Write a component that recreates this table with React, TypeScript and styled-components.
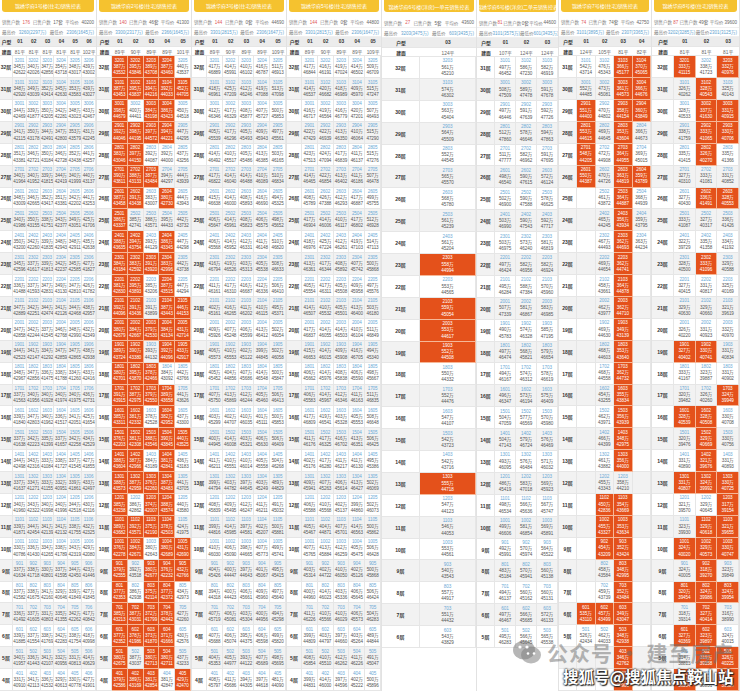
import styled, { createGlobalStyle } from 'styled-components'

const GlobalStyle = createGlobalStyle`
  html, body {
    margin: 0;
    padding: 0;
    background: #fff;
  }
  body {
    font-family: "Liberation Sans", "Noto Sans CJK SC", sans-serif;
  }
`

const Page = styled.div`
  position: relative;
  width: 740px;
  height: 691px;
  overflow: hidden;
  display: flex;
  background: #fff;
`

const Panel = styled.div<{ $w: number }>`
  width: ${(p) => p.$w}px;
  flex: none;
  display: flex;
  flex-direction: column;
  border-right: 1px solid #e2e2e2;
  box-sizing: border-box;
  &:last-child {
    border-right: none;
  }
`

const Title = styled.div`
  height: 12px;
  margin: 0 2px 6px;
  background: #f5c22f;
  border-radius: 0 0 3px 3px;
  color: #fff;
  font-size: 5px;
  display: flex;
  align-items: center;
  justify-content: center;
  white-space: nowrap;
  overflow: hidden;
`

const InfoRow = styled.div`
  height: 10px;
  padding: 0 2px;
  display: flex;
  align-items: center;
  justify-content: space-between;
  font-size: 4.5px;
  color: #888;
  white-space: nowrap;
  overflow: hidden;
  border-bottom: 1px solid #f0f0f0;
  box-sizing: border-box;
`

const Num = styled.span<{ $tone?: 'red' | 'blue' | 'gray' }>`
  color: ${(p) => (p.$tone === 'red' ? '#e0585a' : p.$tone === 'blue' ? '#5e9fd0' : '#666')};
`

const HeadRow = styled.div<{ $cols: string; $shade?: boolean; $h: number }>`
  display: grid;
  grid-template-columns: ${(p) => p.$cols};
  height: ${(p) => p.$h}px;
  background: ${(p) => (p.$shade ? '#ececec' : '#fff')};
  font-size: 4.8px;
  color: #555;
  border-bottom: 1px solid #e6e6e6;
  box-sizing: border-box;
`

const HeadCell = styled.div<{ $bold?: boolean }>`
  display: flex;
  align-items: center;
  justify-content: center;
  font-weight: ${(p) => (p.$bold ? 700 : 400)};
  color: ${(p) => (p.$bold ? '#333' : '#666')};
  white-space: nowrap;
  overflow: hidden;
`

const FloorRow = styled.div<{ $cols: string; $alt: boolean }>`
  display: grid;
  grid-template-columns: ${(p) => p.$cols};
  height: 21.9px;
  background: ${(p) => (p.$alt ? '#f2f2f2' : '#fff')};
  flex: none;
`

const FloorLabel = styled.div`
  display: flex;
  align-items: center;
  justify-content: center;
  font-size: 5px;
  font-weight: 700;
  color: #333;
  border-right: 1px solid #e6e6e6;
  border-bottom: 1px solid #e6e6e6;
`

const Cell = styled.div<{ $mark: string }>`
  display: flex;
  flex-direction: column;
  align-items: center;
  justify-content: center;
  gap: 0.6px;
  font-size: 4.6px;
  line-height: 5.6px;
  letter-spacing: -0.1px;
  white-space: nowrap;
  overflow: hidden;
  color: ${(p) => (p.$mark === 'o' ? '#fff' : '#555')};
  background: ${(p) => (p.$mark === 'o' ? '#e4511b' : 'transparent')};
  border-right: 1px solid ${(p) => (p.$mark === 'o' ? '#f6b797' : '#e6e6e6')};
  border-bottom: 1px solid ${(p) => (p.$mark === 'o' ? '#f6b797' : '#e6e6e6')};
`

const RoomNo = styled.span<{ $sold: boolean }>`
  color: ${(p) => (p.$sold ? '#fff' : '#6aa9d6')};
`

const Stamp = styled.div`
  position: absolute;
  left: 512px;
  top: 637px;
  display: flex;
  align-items: center;
  gap: 5px;
  font-family: "Noto Sans CJK SC", sans-serif;
  font-size: 21px;
  font-weight: 700;
  color: rgba(110, 110, 110, 0.5);
  letter-spacing: 1px;
  white-space: nowrap;
  pointer-events: none;
`

const Sohu = styled.div`
  position: absolute;
  left: 563px;
  top: 666px;
  font-family: "Noto Sans CJK SC", sans-serif;
  font-size: 15.5px;
  line-height: 20px;
  font-weight: 700;
  color: #fff;
  white-space: nowrap;
  text-shadow: 0 0 2px #222, 0 0 2px #222, 1px 1px 1px #222;
  pointer-events: none;
`

interface PanelData {
  title: string
  width: number
  floorW: number
  units: string[]
  areas: number[]
  top: number
  labeled: number
  total: string
  sold: string
  avg: string
  high: string
  low: string
  rows: string[]
  base: number
}

const all = (n: number, s: string) => Array.from({ length: n }, () => s)

const rnd = (a: number, b: number) => {
  const x = Math.sin(a * 12.9898 + b * 78.233) * 43758.5453
  return x - Math.floor(x)
}

const u = (n: number) => Array.from({ length: n }, (_, i) => `0${i + 1}`)

const panels: PanelData[] = [
  {
    title: '锦绣华府1号楼(住宅)销售控表',
    width: 97,
    floorW: 13,
    units: u(6),
    areas: [81, 81, 81, 81, 81, 102],
    top: 32,
    labeled: 29,
    total: '176',
    sold: '17套',
    avg: '40200',
    high: '3260(2297万)',
    low: '2306(1645万)',
    rows: all(29, 'wwwwww'),
    base: 40200,
  },
  {
    title: '锦绣华府2号楼(住宅)销售控表',
    width: 95,
    floorW: 15,
    units: u(5),
    areas: [89, 90, 89, 89, 101],
    top: 32,
    labeled: 29,
    total: '140',
    sold: '46套',
    avg: '41300',
    high: '3300(2317万)',
    low: '2366(1645万)',
    rows: [
      'oooow', 'ooooo', 'owoow', 'oooow', 'oowww', 'oooww', 'oowow', 'owwww',
      'oowow', 'oooow', 'oowow', 'oowoo', 'ooooo', 'oowoo', 'oooww', 'oooow',
      'oowow', 'ooooo', 'oowow', 'oooow', 'owoow', 'oooow', 'oowoo', 'owooo',
      'owoow', 'oooow', 'oooow', 'owoow', 'ooowo',
    ],
    base: 41300,
  },
  {
    title: '锦绣华府3号楼(住宅)销售控表',
    width: 95,
    floorW: 15,
    units: u(5),
    areas: [89, 90, 89, 89, 109],
    top: 32,
    labeled: 29,
    total: '144',
    sold: '0套',
    avg: '44690',
    high: '3301(2815万)',
    low: '2306(1647万)',
    rows: all(29, 'wwwww'),
    base: 43800,
  },
  {
    title: '锦绣华府5号楼(住宅)销售控表',
    width: 95,
    floorW: 15,
    units: u(5),
    areas: [89, 90, 89, 89, 109],
    top: 32,
    labeled: 29,
    total: '144',
    sold: '0套',
    avg: '44800',
    high: '3301(2815万)',
    low: '2306(1647万)',
    rows: all(29, 'wwwww'),
    base: 44200,
  },
  {
    title: '锦绣华府6号楼(洋房)一单元销售控表',
    width: 95,
    floorW: 38,
    units: ['03'],
    areas: [124],
    top: 32,
    labeled: 27,
    total: '27',
    sold: '5套',
    avg: '43600',
    high: '3203(3475万)',
    low: '603(3435万)',
    rows: all(27, 'w').map((r, i) => ([9, 11, 12, 13, 19].includes(i) ? 'o' : r)),
    base: 42800,
  },
  {
    title: '锦绣华府6号楼(洋房)二单元销售控表',
    width: 82,
    floorW: 18,
    units: u(3),
    areas: [107, 124, 124],
    top: 31,
    labeled: 27,
    total: '81',
    sold: '0套',
    avg: '44600',
    high: '3101(3575万)',
    low: '601(3435万)',
    rows: all(27, 'www'),
    base: 44600,
  },
  {
    title: '锦绣华府7号楼(住宅)销售控表',
    width: 93,
    floorW: 18,
    units: u(4),
    areas: [124, 105, 81, 82],
    top: 31,
    labeled: 27,
    total: '74',
    sold: '74套',
    avg: '42750',
    high: '3101(3895万)',
    low: '2307(3365万)',
    rows: [
      'wwoo', 'wwoo', 'owoo', 'owow', 'owow', 'owoo', 'ewow', 'ewow', 'ewow',
      'ewoe', 'ewoe', 'ewoe', 'ewoe', 'ewoe', 'ewoe', 'ewoe', 'ewoe', 'ewoe',
      'ewoe', 'ewwe', 'eooe', 'eooe', 'eooe', 'ewoe', 'ewoe', 'oooe', 'wwoe',
      'eeoe', 'eeoe',
    ],
    base: 42000,
  },
  {
    title: '锦绣华府8号楼(住宅)销售控表',
    width: 88,
    floorW: 22,
    units: u(3),
    areas: [81, 81, 81],
    top: 32,
    labeled: 29,
    total: '87',
    sold: '49套',
    avg: '39600',
    high: '3202(3285万)',
    low: '2301(3125万)',
    rows: [
      'owo', 'wow', 'woo', 'woo', 'wow', 'www', 'woo', 'www', 'www', 'wow',
      'www', 'www', 'www', 'oow', 'www', 'wwo', 'oow', 'wow', 'wow', 'ooo',
      'wwo', 'woo', 'ooo', 'wow', 'ooo', 'wow', 'oow', 'woo', 'owo',
    ],
    base: 38400,
  },
]

const UnitCell = ({ mark, floor, unit, area, base, seed }: {
  mark: string
  floor: number
  unit: string
  area: number
  base: number
  seed: number
}) => {
  if (mark === 'e') return <Cell $mark="e" />
  const price = Math.round(base + floor * 55 + rnd(floor + seed, Number(unit)) * 1800)
  const total = Math.round((area * price) / 10000)
  return (
    <Cell $mark={mark}>
      <RoomNo $sold={mark === 'o'}>{`${floor}${unit}`}</RoomNo>
      <span>{`${total}万`}</span>
      <span>{price}</span>
    </Cell>
  )
}

const BuildingPanel = ({ data, idx }: { data: PanelData; idx: number }) => {
  const cols = `${data.floorW}px repeat(${data.units.length}, 1fr)`
  return (
    <Panel $w={data.width}>
      <Title>{data.title}</Title>
      <InfoRow>
        <span>销售户数</span>
        <Num $tone="red">{data.total}</Num>
        <span>已售户数</span>
        <Num $tone="gray">{data.sold}</Num>
        <span>平均价</span>
        <Num>{data.avg}</Num>
      </InfoRow>
      <InfoRow>
        <span>最高价</span>
        <Num $tone="blue">{data.high}</Num>
        <span>最低价</span>
        <Num $tone="blue">{data.low}</Num>
      </InfoRow>
      <HeadRow $cols={cols} $shade $h={10}>
        <HeadCell $bold>户型</HeadCell>
        {data.units.map((n) => (
          <HeadCell key={n} $bold>{n}</HeadCell>
        ))}
      </HeadRow>
      <HeadRow $cols={cols} $h={9}>
        <HeadCell $bold>建面</HeadCell>
        {data.areas.map((a, i) => (
          <HeadCell key={i}>{`${a}平`}</HeadCell>
        ))}
      </HeadRow>
      {data.rows.map((r, i) => {
        const floor = data.top - i
        return (
          <FloorRow key={i} $cols={cols} $alt={i % 2 === 1}>
            <FloorLabel>{i < data.labeled ? `${floor}层` : ''}</FloorLabel>
            {r.split('').map((m, k) => (
              <UnitCell
                key={k}
                mark={m}
                floor={floor}
                unit={data.units[k]}
                area={data.areas[k]}
                base={data.base}
                seed={idx * 7}
              />
            ))}
          </FloorRow>
        )
      })}
    </Panel>
  )
}

const WeChatMark = () => (
  <svg width="30" height="26" viewBox="0 0 30 26">
    <ellipse cx="12" cy="11" rx="11" ry="9.5" fill="rgba(110,110,110,0.5)" />
    <ellipse cx="19" cy="16" rx="10" ry="8.5" fill="rgba(130,130,130,0.55)" />
    <circle cx="8" cy="8" r="1.6" fill="#fff" />
    <circle cx="15" cy="8" r="1.6" fill="#fff" />
    <circle cx="16" cy="14.5" r="1.3" fill="#fff" />
    <circle cx="22" cy="14.5" r="1.3" fill="#fff" />
  </svg>
)

const App = () => (
  <>
    <GlobalStyle />
    <Page>
      {panels.map((p, i) => (
        <BuildingPanel key={i} data={p} idx={i} />
      ))}
      <Stamp>
        <WeChatMark />
        <span>公众号 · 建至房产</span>
      </Stamp>
      <Sohu>搜狐号@搜狐焦点鞍山站</Sohu>
    </Page>
  </>
)

export default App
